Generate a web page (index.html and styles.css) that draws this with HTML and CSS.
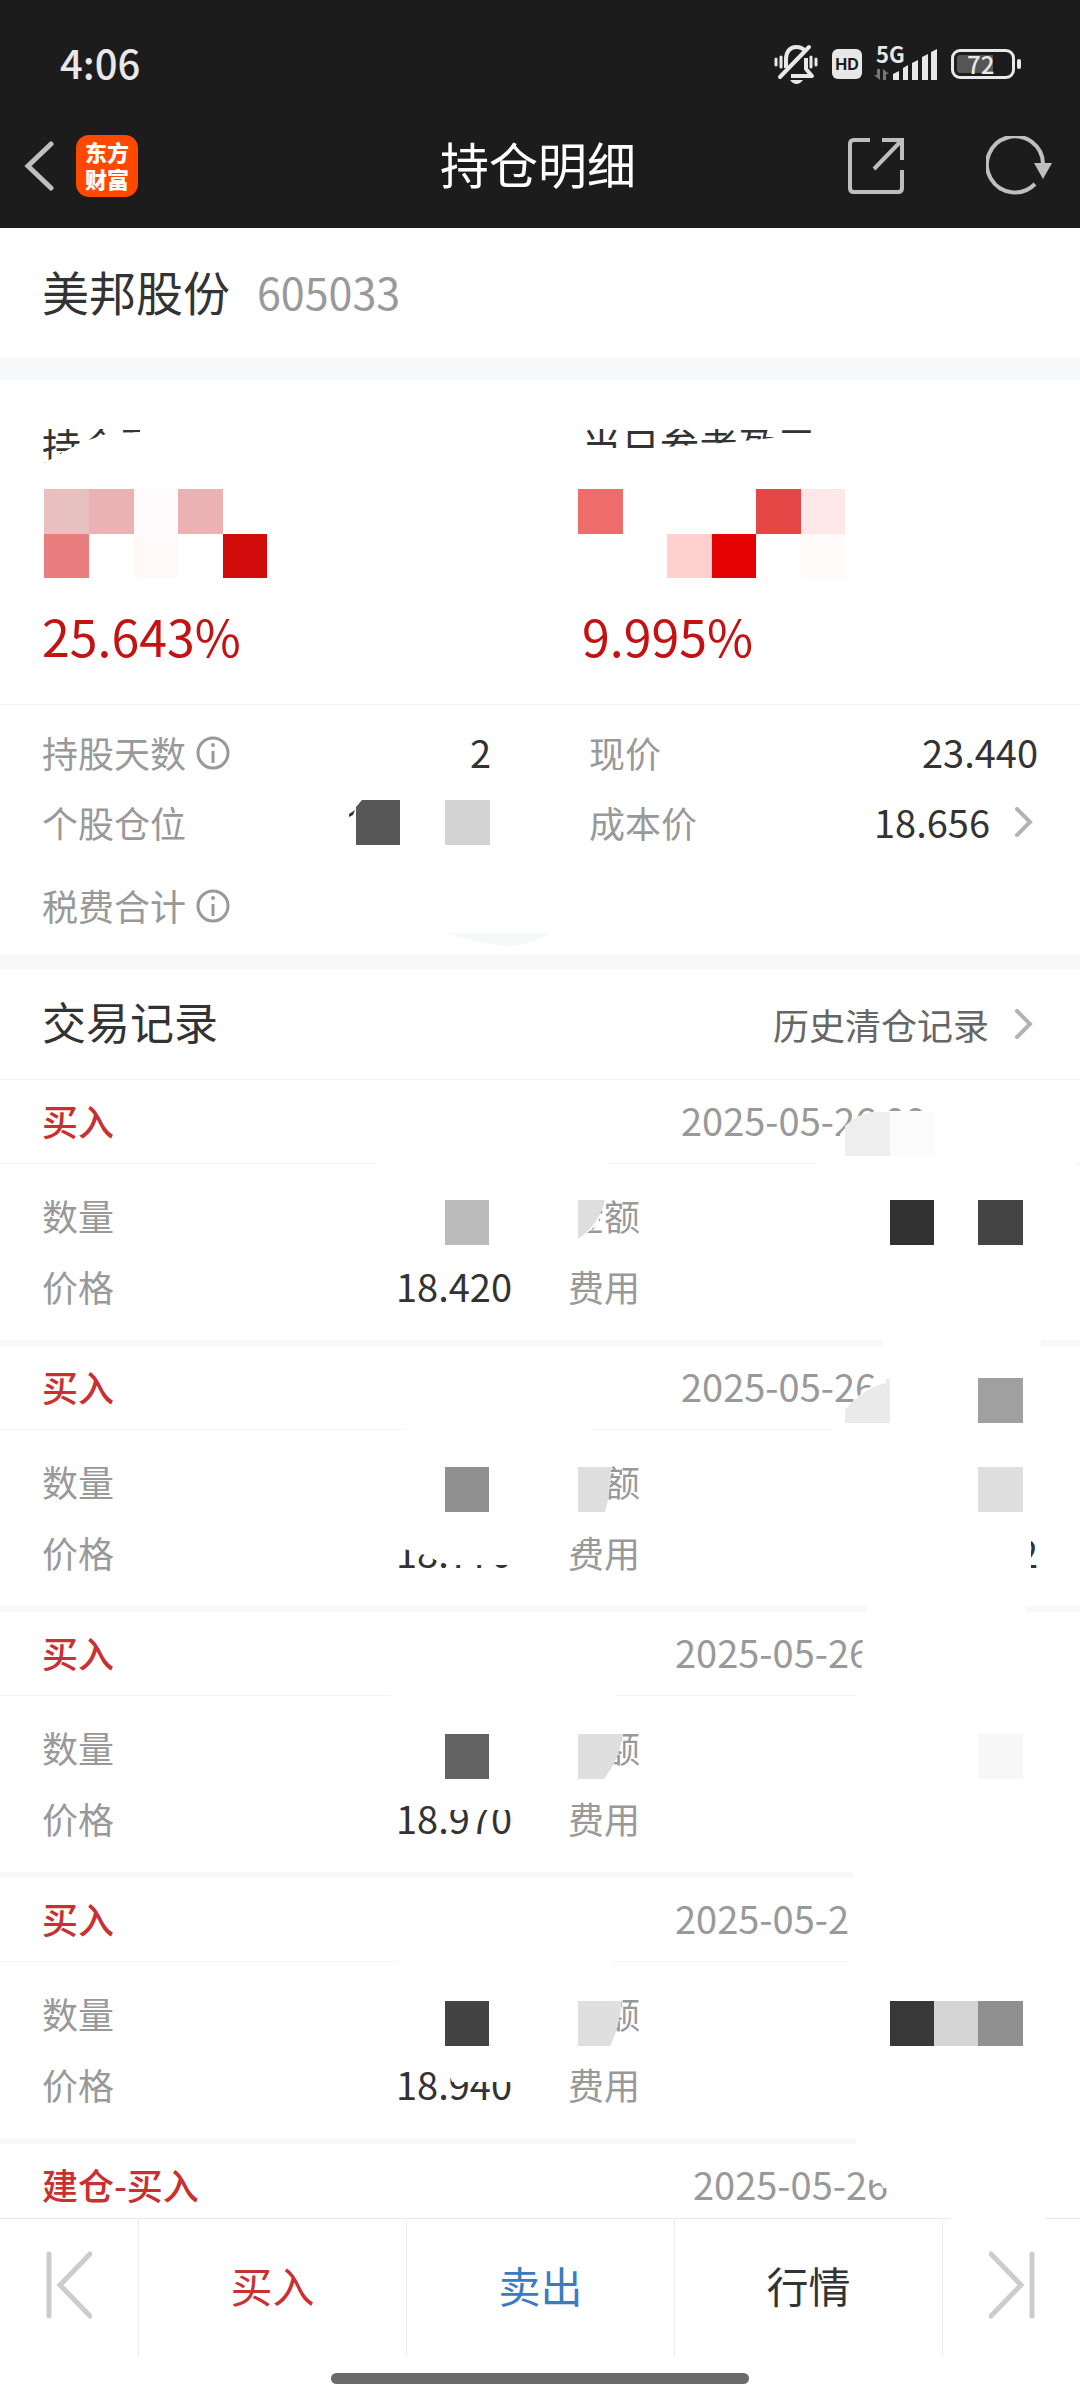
FILE: index.html
```html
<!DOCTYPE html>
<html lang="zh-CN">
<head>
<meta charset="utf-8">
<meta name="viewport" content="width=device-width, initial-scale=1">
<title>持仓明细</title>
<link rel="stylesheet" href="styles.css">
</head>
<body>
<header class="top">
  <div class="status">
    <span class="clock">4:06</span>
    <div class="status-icons">
      <svg width="44" height="40" viewBox="0 0 44 40" fill="none" stroke="#e8e8e8" stroke-width="4">
        <path d="M12 24V15C12 8 16 3 22 3c4 0 7 1 9 4M32 14v11l6 7H17" stroke-linejoin="round"/>
        <path d="M6 33L35 3" stroke-width="4" stroke-linecap="round"/>
        <path d="M16 36h13q-3 4-6.500 4T16 36z" fill="#e8e8e8" stroke="none"/>
        <path d="M2 15v6M7 13v10M37 13v10M42 15v6" stroke-width="3" stroke-linecap="round"/>
      </svg>
      <span class="hd">HD</span>
      <div class="signal">
        <span class="net">5G</span>
        <svg width="64" height="34" viewBox="0 0 64 34">
          <path d="M6 23H3v6H0l6 5zM9 34h3v-6h3l-6-5z" fill="#777"/>
          <path d="M19 34v-6l6-3v9zM29 34V22l5-3v15zM38 34V17l6-3v20zM48 34V11l6-3v26zM57 34V6l6-3v31z" fill="#e8e8e8"/>
        </svg>
      </div>
      <div class="battery"><span class="level">72</span></div>
    </div>
  </div>
  <div class="toolbar">
    <div class="tool-side">
      <button class="icon-btn" aria-label="返回">
        <svg width="30" height="50" viewBox="0 0 30 50" fill="none" stroke="#bfbfbf" stroke-width="5" stroke-linecap="round"><path d="M27 3L4 25l23 22"/></svg>
      </button>
      <span class="logo">东方<br>财富</span>
    </div>
    <h1>持仓明细</h1>
    <div class="tool-side tool-end">
      <button class="icon-btn" aria-label="分享">
        <svg width="56" height="56" viewBox="0 0 56 56" fill="none" stroke="#bfbfbf" stroke-width="4"><path d="M22 2H6Q2 2 2 6v44q0 4 4 4h44q4 0 4-4V32M34 2h20v20M54 2L26 31"/></svg>
      </button>
      <button class="icon-btn" aria-label="刷新">
        <svg width="66" height="60" viewBox="0 0 66 60"><path d="M57 28A28 28 0 1 0 49 48" fill="none" stroke="#bfbfbf" stroke-width="4"/><path d="M48 27h18l-9 16z" fill="#bfbfbf"/></svg>
      </button>
    </div>
  </div>
</header>

<main>
  <section class="stock"><h2>美邦股份</h2><span class="code">605033</span></section>

  <section class="summary">
    <div class="profit">
      <span class="profit-label clip-hold">持仓盈亏</span>
      <svg class="mosaic" width="540" height="90" viewBox="0 0 540 90">
        <path d="M44 0h45v45H44z" fill="#e9c0c0"/><path d="M89 0h45v45H89z" fill="#eab2b3"/><path d="M134 0h44v45h-44z" fill="#fffbfc"/><path d="M178 0h45v45h-45z" fill="#eab2b3"/>
        <path d="M44 45h45v44H44z" fill="#ea7e7f"/><path d="M134 45h44v44h-44z" fill="#fff9f9"/><path d="M223 45h44v44h-44z" fill="#d10c0b"/>
      </svg>
      <span class="percent">25.643%</span>
    </div>
    <div class="profit">
      <span class="profit-label clip-day">当日参考盈亏</span>
      <svg class="mosaic" width="540" height="90" viewBox="0 0 540 90">
        <path d="M38 0h45v45H38z" fill="#ef6c6c"/><path d="M216 0h45v45h-45z" fill="#e54646"/><path d="M261 0h44v45h-44z" fill="#fee8e7"/>
        <path d="M127 45h45v44h-45z" fill="#fed0d0"/><path d="M172 45h44v44h-44z" fill="#e40302"/><path d="M261 45h44v44h-44z" fill="#fffbfa"/>
      </svg>
      <span class="percent">9.995%</span>
    </div>
  </section>

  <section class="facts">
    <div class="fact">
      <span>持股天数</span>
      <svg class="info" width="34" height="34" viewBox="0 0 34 34"><circle cx="17" cy="17" r="15" fill="none" stroke="#999" stroke-width="3"/><path d="M17 15v12" stroke="#999" stroke-width="3"/><circle cx="17" cy="9" r="2" fill="#999"/></svg>
      <span class="num">2</span>
    </div>
    <div class="fact"><span>现价</span><span class="num">23.440</span></div>
    <div class="fact">
      <span>个股仓位</span>
      <svg class="num" width="144" height="46" viewBox="0 0 144 46"><path d="M2 15l6-4-2 5-4 2z" fill="#333"/><path d="M9 8l6-7h38v45H9z" fill="#575757"/><path d="M98 1h45v45H98z" fill="#d3d3d3"/></svg>
    </div>
    <div class="fact"><span>成本价</span><a class="num cost" href="#cost">18.656<svg class="arrow" width="20" height="30" viewBox="0 0 20 30"><path d="M3 2l13 13L3 28"/></svg></a></div>
    <div class="fact fact-last">
      <span>税费合计</span>
      <svg class="info" width="34" height="34" viewBox="0 0 34 34"><circle cx="17" cy="17" r="15" fill="none" stroke="#999" stroke-width="3"/><path d="M17 15v12" stroke="#999" stroke-width="3"/><circle cx="17" cy="9" r="2" fill="#999"/></svg>
    </div>
    <svg class="smudge" width="104" height="14" viewBox="0 0 104 14"><path d="M0 0h103Q84 13 58 13 36 12 0 0z" fill="#f7f9f9"/></svg>
  </section>

  <section class="trades">
    <div class="trades-head"><h2>交易记录</h2><a href="#history">历史清仓记录<svg class="arrow" width="20" height="30" viewBox="0 0 20 30"><path d="M3 2l13 13L3 28"/></svg></a></div>

    <article class="trade">
      <div class="trade-head"><h3>买入</h3><time class="date">2025-05-26 09</time></div>
      <div class="trade-body">
        <div>数量</div><div>金额</div>
        <div>价格<span class="num">18.420</span></div><div>费用</div>
      </div>
      <svg class="cover" viewBox="0 0 1080 266" preserveAspectRatio="none">
        <path d="M840 54L846 47Q858 34 875 32L890 31h170v50H840zM375 82h234v3H375zM818 82h258v3H818zM883 258h158v8H883zM564 114h40l-6 30-10 8-12 12h-12z" fill="#fff"/>
        <path d="M845 46Q858 33 875 32h15v44h-45z" fill="#eee"/><path d="M890 32h44v44h-44z" fill="#fbfbfb"/>
        <path d="M445 120h44v45h-44z" fill="#bbb"/><path d="M578 120h27q-5 23-27 39z" fill="#dedede"/>
        <path d="M890 120h44v45h-44z" fill="#323232"/><path d="M978 120h45v45h-45z" fill="#444"/>
      </svg>
    </article>

    <article class="trade">
      <div class="trade-head"><h3>买入</h3><time class="date">2025-05-26</time></div>
      <div class="trade-body">
        <div>数量</div><div>金额</div>
        <div>价格<span class="num">18.770</span></div><div>费用<span class="num">2</span></div>
      </div>
      <svg class="cover" viewBox="0 0 1080 266" preserveAspectRatio="none">
        <path d="M850 62Q862 42 877 38V22h20v52h-47zM405 82h186v3H405zM833 82h247v3H833zM867 258h159v8H867zM564 114h46l-6 50h-40zM396 186h120v33h-66l-10-3-20-9-24-6zM566 188h24l-24 20zM1000 190h31v36h-31z" fill="#fff"/>
        <path d="M845 64Q863 42 886 37v-4h4v44h-45z" fill="#eaeaea"/><path d="M978 32h45v45h-45z" fill="#a0a0a0"/>
        <path d="M445 121h44v45h-44z" fill="#909090"/><path d="M578 121h33q0 24-6 45h-27z" fill="#dfdfdf"/><path d="M978 121h45v45h-45z" fill="#dfdfdf"/>
      </svg>
    </article>

    <article class="trade">
      <div class="trade-head"><h3>买入</h3><time class="date date-early">2025-05-26</time></div>
      <div class="trade-body">
        <div>数量</div><div>金额</div>
        <div>价格<span class="num">18.970</span></div><div>费用</div>
      </div>
      <svg class="cover" viewBox="0 0 1080 266" preserveAspectRatio="none">
        <path d="M863 20h40v50h-42zM391 82h225v3H391zM856 82h224v3H856zM853 258h227v8H853zM564 114h59l-19 54h-40zM452 186h62v12h-62z" fill="#fff"/>
        <path d="M445 122h44v45h-44z" fill="#626262"/><path d="M578 122h45q-4 27-19 45h-26z" fill="#dfdfdf"/><path d="M978 122h45v45h-45z" fill="#f7f7f7"/>
      </svg>
    </article>

    <article class="trade">
      <div class="trade-head"><h3>买入</h3><time class="date date-early">2025-05-2</time></div>
      <div class="trade-body">
        <div>数量</div><div>金额</div>
        <div>价格<span class="num">18.940</span></div><div>费用</div>
      </div>
      <svg class="cover" viewBox="0 0 1080 266" preserveAspectRatio="none">
        <path d="M398 82h215v3H398zM847 82h233v3H847zM856 258h224v8H856zM564 114h58l-12 54h-46zM446 186h68v18h-62z" fill="#fff"/>
        <path d="M445 123h44v45h-44z" fill="#434343"/><path d="M578 123h44q-3 28-12 45h-32z" fill="#dfdfdf"/>
        <path d="M890 123h44v45h-44z" fill="#383838"/><path d="M934 123h44v45h-44z" fill="#d5d5d5"/><path d="M978 123h45v45h-45z" fill="#909090"/>
      </svg>
    </article>

    <article class="trade">
      <div class="trade-head"><h3>建仓-买入</h3><time class="date date-late">2025-05-26</time></div>
      <svg class="cover" viewBox="0 0 1080 266" preserveAspectRatio="none"><path d="M870 20h28v24h-15l-4-8h-9zM950 72h96v6h-96z" fill="#fff"/></svg>
    </article>
  </section>
</main>

<footer>
  <nav>
    <button class="step" aria-label="上一只"><svg width="46" height="68" viewBox="0 0 46 68"><path d="M3 3v62M44 3L14 34l30 31"/></svg></button>
    <button class="buy">买入</button>
    <button class="sell">卖出</button>
    <button>行情</button>
    <button class="step" aria-label="下一只"><svg width="46" height="68" viewBox="0 0 46 68"><path d="M43 3v62M2 3l30 31L2 65"/></svg></button>
  </nav>
  <div class="home"></div>
</footer>
</body>
</html>
```
FILE: styles.css
```css
* { box-sizing: border-box; }
body {
  margin: 0;
  min-height: 100vh;
  display: flex;
  flex-direction: column;
  background: #fff;
  color: #333;
  font: 36px/50px "Noto Sans CJK SC", sans-serif;
}
h1, h2, h3 { margin: 0; font-weight: 400; }
a { color: inherit; text-decoration: none; }
button { border: 0; padding: 0; background: none; font: inherit; color: inherit; }
svg { display: block; flex: none; }

.top { background: #1c1c1c; color: #fff; }
.status {
  display: flex;
  justify-content: space-between;
  align-items: center;
  height: 104px;
  padding: 24px 65px 0 60px;
}
.clock { padding-bottom: 4px; font-size: 40px; font-weight: 500; color: #e8e8e8; }
.status-icons { display: flex; align-items: center; color: #e8e8e8; }
.hd {
  width: 30px;
  height: 30px;
  margin: 0 12px 0 14px;
  border-radius: 6px;
  background: #e8e8e8;
  color: #1c1c1c;
  font: 700 16px/30px Inter, sans-serif;
  text-align: center;
}
.signal { position: relative; padding-bottom: 2px; }
.net { position: absolute; left: 2px; top: -6px; font: 700 22px/26px "Noto Sans CJK SC", sans-serif; }
.battery {
  position: relative;
  width: 64px;
  height: 30px;
  margin-left: 13px;
  padding: 3px;
  border: 3px solid #e8e8e8;
  border-radius: 9px;
}
.battery::after {
  content: "";
  position: absolute;
  right: -9px;
  top: 7px;
  width: 4px;
  height: 10px;
  border-radius: 2px;
  background: #e8e8e8;
}
.level {
  display: block;
  padding-left: 10px;
  border-radius: 3px;
  background: linear-gradient(to right, #555 70%, transparent 70%);
  font-size: 24px;
  font-weight: 500;
  line-height: 18px;
}
.toolbar {
  display: grid;
  grid-template-columns: 1fr auto 1fr;
  align-items: center;
  height: 124px;
  padding: 0 28px 0 24px;
}
.toolbar h1 { font-size: 49px; line-height: 64px; padding-bottom: 6px; }
.tool-side { display: flex; align-items: center; gap: 22px; }
.tool-end { justify-content: flex-end; gap: 82px; }
.logo {
  width: 62px;
  height: 62px;
  padding-top: 3px;
  border-radius: 13px;
  background: #ff4800;
  font-size: 22px;
  font-weight: 900;
  line-height: 27px;
  text-align: center;
}

.stock {
  display: flex;
  align-items: center;
  gap: 27px;
  height: 130px;
  padding: 0 42px 4px;
}
.stock h2 { font-size: 47px; line-height: 60px; }
.code { color: #999; font-size: 43px; }

.summary {
  display: grid;
  grid-template-columns: 1fr 1fr;
  border-top: 22px solid #f7f8fa;
  border-bottom: 1px solid #f3f4f6;
  padding: 38px 0 39px;
}
.profit { display: flex; flex-direction: column; overflow: hidden; }
.profit-label { height: 56px; padding-left: 42px; font-size: 39px; line-height: 52px; }
.clip-hold { clip-path: polygon(0 11px, 140px 11px, 140px 14px, 106px 16px, 80px 25px, 42px 46px, 0 46px); }
.clip-day { clip-path: polygon(0 11px, 300px 11px, 270px 15px, 230px 20px, 194px 24px, 113px 30px, 0 30px); }
.mosaic { margin-top: 15px; }
.percent { padding-left: 42px; margin-top: 26px; color: #c41212; font-size: 50px; line-height: 60px; }

.facts {
  position: relative;
  display: grid;
  grid-template-columns: 1fr 1fr;
  column-gap: 98px;
  padding: 12px 42px 14px;
  border-bottom: 14px solid #f7f8fa;
  color: #999;
}
.fact { display: flex; align-items: center; height: 70px; }
.fact-last { height: 84px; padding-top: 12px; }
.info { margin: 2px 0 0 10px; }
.num { margin-left: auto; color: #333; font-size: 38px; }
.cost { display: flex; align-items: center; gap: 24px; padding-right: 4px; }
.arrow { fill: none; stroke: #b3b3b3; stroke-width: 4; stroke-linecap: round; }
.smudge { position: absolute; left: 448px; bottom: 8px; }

.trades-head {
  display: flex;
  align-items: center;
  justify-content: space-between;
  height: 111px;
  padding: 0 46px 0 42px;
  border-bottom: 1px solid #f3f4f6;
}
.trades-head h2 { font-size: 44px; line-height: 60px; padding-bottom: 6px; }
.trades-head a { display: flex; align-items: center; gap: 25px; color: #666; }
.trade { position: relative; }
.trade:not(:last-child) { border-bottom: 6px solid #f7f8fa; }
.trade-head {
  display: flex;
  align-items: center;
  justify-content: space-between;
  height: 83px;
  padding: 0 42px 4px;
}
.trade h3 { color: #c9302f; font-size: 36px; font-weight: 500; }
.date { width: 357px; color: #999; font-size: 38px; white-space: nowrap; }
.date-early { width: 363px; }
.date-late { width: 345px; }
.trade-body {
  display: grid;
  grid-template-columns: 1fr 1fr;
  column-gap: 56px;
  padding: 15px 42px 19px;
  border-top: 1px solid #f3f4f6;
  color: #999;
}
.trade-body > div { display: flex; align-items: center; height: 71px; }
.cover { position: absolute; z-index: 1; left: 0; top: 0; width: 100%; height: 266px; pointer-events: none; }
.trade:last-child { height: 74px; }

footer { margin-top: auto; }
nav {
  display: grid;
  grid-template-columns: 138px 1fr 1fr 1fr 138px;
  height: 139px;
  border-top: 1px solid #e8e8e8;
}
nav button { padding-bottom: 6px; font-size: 42px; }
nav button + button { border-left: 1px solid #ececec; }
nav .buy { color: #c9302f; }
nav .sell { color: #3a7cc3; }
.step svg { margin: 0 auto; fill: none; stroke: #ccc; stroke-width: 5; stroke-linecap: round; }
.home { width: 418px; height: 11px; margin: 16px auto; border-radius: 6px; background: #6b6b6b; }
```
